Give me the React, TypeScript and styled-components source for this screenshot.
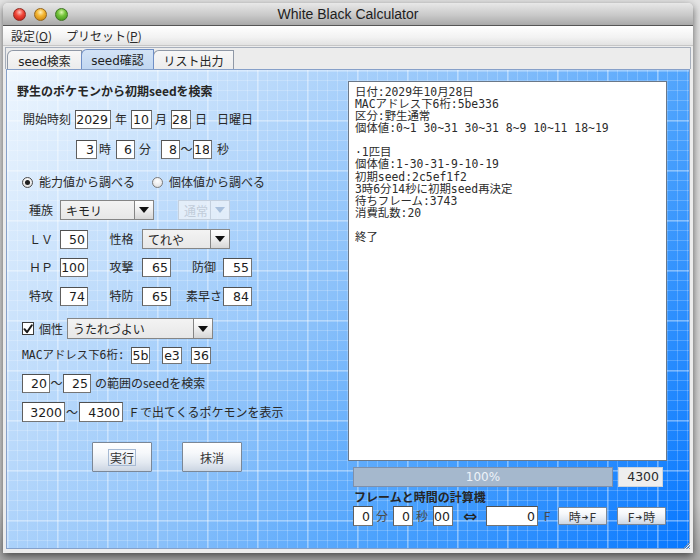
import React from "react";
import styled, { createGlobalStyle, css } from "styled-components";

const JP = `"Noto Sans CJK JP", sans-serif`;
const UI = `"DejaVu Sans", "Noto Sans CJK JP", sans-serif`;
const MONO = `"DejaVu Sans Mono", "Noto Sans CJK JP", monospace`;

const GlobalStyle = createGlobalStyle`
  html, body { margin: 0; padding: 0; }
  body { width: 700px; height: 560px; overflow: hidden; background: #cdcdcd; font-family: ${JP}; }
  *, *::before, *::after { box-sizing: border-box; }
`;

const Desktop = styled.div`
  width: 700px;
  height: 560px;
  padding: 3px 0 0 3px;
  background: linear-gradient(#e4e4e4, #cfcfcf 90%, #a8a8a8);
`;

const Window = styled.div`
  position: relative;
  width: 690px;
  height: 550px;
  display: flex;
  flex-direction: column;
  background: #ececec;
  border-radius: 5px 5px 0 0;
  overflow: hidden;
  box-shadow: 0 3px 9px rgba(0, 0, 0, 0.6);
`;

const TitleBar = styled.div`
  height: 23px;
  flex: none;
  display: grid;
  grid-template-columns: 1fr auto 1fr;
  align-items: center;
  background: linear-gradient(#e8e8e8, #c9c9c9 55%, #a9a9a9);
  border-bottom: 1px solid #555;
`;

const Lights = styled.div`
  display: flex;
  gap: 8px;
  padding-left: 10px;
`;

const Light = styled.span<{ $c: "red" | "yellow" | "green" }>`
  width: 13px;
  height: 13px;
  border-radius: 50%;
  ${(p) =>
    p.$c === "red"
      ? css`
          background: radial-gradient(circle at 50% 30%, #ffc2ba 0%, #f0483a 40%, #b3130c 100%);
          border: 1px solid #8e2a22;
        `
      : p.$c === "yellow"
      ? css`
          background: radial-gradient(circle at 50% 30%, #fff0b8 0%, #f4b632 40%, #c07a0a 100%);
          border: 1px solid #94651c;
        `
      : css`
          background: radial-gradient(circle at 50% 30%, #dcf7b0 0%, #74c43a 40%, #3a8c18 100%);
          border: 1px solid #3f7424;
        `}
`;

const Title = styled.div`
  font: 14px "Liberation Sans", Arial, sans-serif;
  color: #1d1d1d;
`;

const MenuBar = styled.div`
  height: 20px;
  flex: none;
  display: flex;
  align-items: center;
  gap: 14px;
  padding-left: 8px;
  background: linear-gradient(#ffffff, #f2f2f2 60%, #e2e2e2);
  border-bottom: 1px solid #c6c6c6;
`;

const MenuItem = styled.span`
  font: 12px/18px ${JP};
  color: #2a2a2a;
`;

const Body = styled.div`
  flex: 1;
  display: flex;
  flex-direction: column;
  padding: 1px 2px 4px 2px;
`;

const TabStrip = styled.div`
  height: 22px;
  flex: none;
  display: flex;
  align-items: flex-end;
  padding-left: 1px;
  border: 1px solid #a7afbc;
  border-bottom: none;
`;

const Tab = styled.div<{ $w: number; $active?: boolean }>`
  width: ${(p) => p.$w}px;
  height: ${(p) => (p.$active ? 20 : 19)}px;
  margin-left: -1px;
  &:first-child { margin-left: 0; }
  position: relative;
  z-index: ${(p) => (p.$active ? 1 : 0)};
  display: flex;
  align-items: center;
  justify-content: center;
  font: 12px ${UI};
  color: #222;
  border: 1px solid ${(p) => (p.$active ? "#6f8fc6" : "#8f98a6")};
  border-bottom: none;
  border-top-left-radius: 6px;
  background: ${(p) => (p.$active ? "linear-gradient(#d3e3f6, #c1d7f1)" : "linear-gradient(#f7f7f7, #ececec)")};
`;

const Panel = styled.div`
  height: 480px;
  flex: none;
  margin: 0 1px;
  display: flex;
  padding: 11px 0 0 10px;
  border: 1px solid #86a0c9;
  background-color: #8cc0f8;
  background-image: linear-gradient(rgba(255, 255, 255, 0.24) 2px, transparent 2px),
    linear-gradient(90deg, rgba(255, 255, 255, 0.24) 2px, transparent 2px),
    linear-gradient(rgba(255, 255, 255, 0.2) 1px, transparent 1px),
    linear-gradient(90deg, rgba(255, 255, 255, 0.2) 1px, transparent 1px),
    linear-gradient(125deg, #eef6fe 0%, #bddbfb 25%, #89c0fa 48%, #4aa1fd 69%, #0878ff 100%);
  background-size: 50px 50px, 50px 50px, 10px 10px, 10px 10px, 100% 100%;
  background-position: 0 0, 0 0, 0 0, 0 0, 0 0;
`;

const LeftCol = styled.div`
  width: 331px;
  flex: none;
  display: flex;
  flex-direction: column;
`;

const RightCol = styled.div`
  width: 319px;
  flex: none;
  display: flex;
  flex-direction: column;
`;

const Heading = styled.div<{ $mt?: number; $ml?: number; $h?: number }>`
  font: bold 12px/${(p) => p.$h ?? 20}px ${JP};
  color: #262626;
  margin-top: ${(p) => p.$mt ?? 0}px;
  margin-left: ${(p) => p.$ml ?? 0}px;
  white-space: nowrap;
`;

const Row = styled.div<{ $mt?: number; $ml?: number; $h?: number }>`
  display: flex;
  align-items: center;
  height: ${(p) => p.$h ?? 20}px;
  margin-top: ${(p) => p.$mt ?? 0}px;
  margin-left: ${(p) => p.$ml ?? 0}px;
`;

const Text = styled.span<{ $w?: number; $ml?: number; $pl?: number; $align?: "left" | "center" | "right"; $mono?: boolean; $tone?: string }>`
  flex: none;
  display: block;
  white-space: nowrap;
  font: ${(p) => (p.$mono ? `11.4px/20px ${MONO}` : `12px/20px ${JP}`)};
  color: ${(p) => p.$tone ?? "#282828"};
  ${(p) => p.$w != null && css`width: ${p.$w}px;`}
  margin-left: ${(p) => p.$ml ?? 0}px;
  padding-left: ${(p) => p.$pl ?? 0}px;
  text-align: ${(p) => p.$align ?? "left"};
`;

const Field = styled.input.attrs({ readOnly: true, type: "text" })<{ $w: number; $h?: number; $ml?: number; $center?: boolean }>`
  flex: none;
  display: block;
  width: ${(p) => p.$w}px;
  height: ${(p) => p.$h ?? 19}px;
  margin: 0 0 0 ${(p) => p.$ml ?? 0}px;
  padding: 0 ${(p) => (p.$center ? 0 : 2)}px 0 0;
  border: 1px solid #747474;
  border-top-color: #4f4f4f;
  border-left-color: #5e5e5e;
  background: #fff;
  color: #1c1c1c;
  font: 12.5px ${UI};
  text-align: ${(p) => (p.$center ? "center" : "right")};
  outline: none;
  border-radius: 0;
`;

const Combo = styled.div<{ $w: number; $h?: number; $ml?: number; $disabled?: boolean }>`
  flex: none;
  display: flex;
  width: ${(p) => p.$w}px;
  height: ${(p) => p.$h ?? 20}px;
  margin-left: ${(p) => p.$ml ?? 0}px;
  border: 1px solid ${(p) => (p.$disabled ? "#c4d0de" : "#858585")};
  background: ${(p) => (p.$disabled ? "rgba(238, 243, 249, 0.8)" : "linear-gradient(#f3f3f3, #e7e7e7)")};
`;

const ComboValue = styled.span<{ $disabled?: boolean }>`
  flex: 1;
  display: flex;
  align-items: center;
  padding-left: 5px;
  font: 12px ${JP};
  color: ${(p) => (p.$disabled ? "#c1ccd9" : "#222")};
  white-space: nowrap;
  overflow: hidden;
`;

const ComboButton = styled.span<{ $disabled?: boolean }>`
  flex: none;
  width: 19px;
  display: flex;
  align-items: center;
  justify-content: center;
  border-left: 1px solid ${(p) => (p.$disabled ? "#c4d0de" : "#858585")};
  background: ${(p) => (p.$disabled ? "transparent" : "linear-gradient(#ffffff, #f1f1f1 45%, #d6d6d6)")};
`;

const Caret = styled.span<{ $disabled?: boolean }>`
  width: 0;
  height: 0;
  border-left: 5px solid transparent;
  border-right: 5px solid transparent;
  border-top: 6px solid ${(p) => (p.$disabled ? "#a9c0dc" : "#111")};
`;

const Radio = styled.span<{ $on?: boolean; $ml?: number }>`
  flex: none;
  width: 11px;
  height: 11px;
  margin-left: ${(p) => p.$ml ?? 0}px;
  border-radius: 50%;
  border: 1px solid ${(p) => (p.$on ? "#4a4a4a" : "#7a7a7a")};
  background: radial-gradient(circle at 50% 35%, #ffffff 0%, #e9e9e9 60%, #cfcfcf 100%);
  display: flex;
  align-items: center;
  justify-content: center;
  &::after {
    content: "";
    display: ${(p) => (p.$on ? "block" : "none")};
    width: 5px;
    height: 5px;
    border-radius: 50%;
    background: #1d1d1d;
  }
`;

const CheckBox = styled.span`
  flex: none;
  width: 12px;
  height: 13px;
  border: 1px solid #3c3c3c;
  background: #fff;
  display: flex;
  align-items: center;
  justify-content: center;
`;

const Button = styled.button<{ $w: number; $h: number; $ml?: number }>`
  flex: none;
  width: ${(p) => p.$w}px;
  height: ${(p) => p.$h}px;
  margin: 0 0 0 ${(p) => p.$ml ?? 0}px;
  padding: 0;
  border: 1px solid #7b8796;
  border-radius: 1px;
  background: linear-gradient(#ffffff 0%, #f6f8fb 35%, #e3e9f1 70%, #cbd5e2 100%);
  font: 12px ${JP};
  color: #333;
  display: flex;
  align-items: center;
  justify-content: center;
  white-space: nowrap;
`;

const FocusRing = styled.span`
  border: 1px solid #a6bad4;
  padding: 0 1px;
  line-height: 15px;
`;

const SmallArrow = styled.span`
  font: bold 8px ${UI};
  margin: 0 1px;
  position: relative;
  top: 1px;
`;

const TextArea = styled.div`
  width: 319px;
  height: 380px;
  flex: none;
  background: #fff;
  border: 1px solid #6b7888;
  padding: 4px 6px;
  font: 11.4px/12.08px ${MONO};
  color: #2c2c2c;
  white-space: pre;
  overflow: hidden;
`;

const Progress = styled.div<{ $ml?: number }>`
  position: relative;
  flex: none;
  width: 260px;
  height: 20px;
  margin-left: ${(p) => p.$ml ?? 0}px;
  border: 1px solid #7f90aa;
  background: #b8c6d6;
  display: flex;
`;

const ProgressFill = styled.div`
  height: 100%;
  background: #a5b8cd;
`;

const ProgressLabel = styled.span`
  position: absolute;
  inset: 0;
  display: flex;
  align-items: center;
  justify-content: center;
  font: 12px ${UI};
  color: #eef3f9;
`;

const Count = styled.div<{ $ml?: number }>`
  flex: none;
  width: 45px;
  height: 20px;
  margin-left: ${(p) => p.$ml ?? 0}px;
  border: 1px solid #cfd4da;
  background: #eeeeee;
  font: 12.5px/18px ${UI};
  color: #2a2a2a;
  text-align: right;
  padding-right: 3px;
`;

const Swap = styled.span<{ $ml?: number }>`
  flex: none;
  width: 18px;
  margin-left: ${(p) => p.$ml ?? 0}px;
  font: 17px/20px ${UI};
  color: #222;
  text-align: center;
`;

const Grip = styled.svg`
  position: absolute;
  right: 2px;
  bottom: 3px;
`;

const textLog = `日付:2029年10月28日
MACアドレス下6桁:5be336
区分:野生通常
個体値:0~1 30~31 30~31 8~9 10~11 18~19

·1匹目
個体値:1-30-31-9-10-19
初期seed:2c5ef1f2
3時6分14秒に初期seed再決定
待ちフレーム:3743
消費乱数:20

終了`;

const progress = 100;

export default function App() {
  return (
    <>
      <GlobalStyle />
      <Desktop>
        <Window>
          <TitleBar>
            <Lights>
              <Light $c="red" />
              <Light $c="yellow" />
              <Light $c="green" />
            </Lights>
            <Title>White Black Calculator</Title>
            <span />
          </TitleBar>
          <MenuBar>
            <MenuItem>
              設定(<u>O</u>)
            </MenuItem>
            <MenuItem>
              プリセット(<u>P</u>)
            </MenuItem>
          </MenuBar>
          <Body>
            <TabStrip>
              <Tab $w={75}>seed検索</Tab>
              <Tab $w={73} $active>
                seed確認
              </Tab>
              <Tab $w={81}>リスト出力</Tab>
            </TabStrip>
            <Panel>
              <LeftCol>
                <Heading>野生のポケモンから初期seedを検索</Heading>

                <Row $mt={8} $ml={6}>
                  <Text $w={48}>開始時刻</Text>
                  <Field $w={36} $ml={4} defaultValue="2029" />
                  <Text $w={12} $ml={4}>年</Text>
                  <Field $w={21} $ml={4} defaultValue="10" />
                  <Text $w={12} $ml={3}>月</Text>
                  <Field $w={20} $ml={4} defaultValue="28" />
                  <Text $w={12} $ml={4}>日</Text>
                  <Text $ml={10}>日曜日</Text>
                </Row>

                <Row $mt={10} $ml={59}>
                  <Field $w={21} defaultValue="3" />
                  <Text $w={12} $ml={2}>時</Text>
                  <Field $w={19} $ml={5} defaultValue="6" />
                  <Text $w={12} $ml={4}>分</Text>
                  <Field $w={19} $ml={10} defaultValue="8" />
                  <Text $w={13} $align="center">〜</Text>
                  <Field $w={19} defaultValue="18" />
                  <Text $w={12} $ml={5}>秒</Text>
                </Row>

                <Row $mt={13} $ml={5}>
                  <Radio $on />
                  <Text $w={113} $ml={6}>能力値から調べる</Text>
                  <Radio />
                  <Text $ml={6}>個体値から調べる</Text>
                </Row>

                <Row $mt={8} $ml={5}>
                  <Text $w={38} $align="center">種族</Text>
                  <Combo $w={94}>
                    <ComboValue>キモリ</ComboValue>
                    <ComboButton>
                      <Caret />
                    </ComboButton>
                  </Combo>
                  <Combo $w={52} $ml={24} $disabled>
                    <ComboValue $disabled>通常</ComboValue>
                    <ComboButton $disabled>
                      <Caret $disabled />
                    </ComboButton>
                  </Combo>
                </Row>

                <Row $mt={9} $ml={5}>
                  <Text $w={38} $align="center">ＬＶ</Text>
                  <Field $w={28} defaultValue="50" />
                  <Text $w={54} $pl={13} $align="center">性格</Text>
                  <Combo $w={88}>
                    <ComboValue>てれや</ComboValue>
                    <ComboButton>
                      <Caret />
                    </ComboButton>
                  </Combo>
                </Row>

                <Row $mt={8} $ml={5}>
                  <Text $w={38} $align="center">ＨＰ</Text>
                  <Field $w={28} defaultValue="100" />
                  <Text $w={54} $pl={13} $align="center">攻撃</Text>
                  <Field $w={29} defaultValue="65" />
                  <Text $w={52} $pl={14} $align="center">防御</Text>
                  <Field $w={29} defaultValue="55" />
                </Row>

                <Row $mt={9} $ml={5}>
                  <Text $w={38} $align="center">特攻</Text>
                  <Field $w={28} defaultValue="74" />
                  <Text $w={54} $pl={13} $align="center">特防</Text>
                  <Field $w={29} defaultValue="65" />
                  <Text $w={52} $pl={14} $align="center">素早さ</Text>
                  <Field $w={29} defaultValue="84" />
                </Row>

                <Row $mt={12} $ml={5} $h={21}>
                  <CheckBox>
                    <svg width="10" height="10" viewBox="0 0 10 10">
                      <path d="M1.5 5.2 L4 8.2 L8.8 1.2" fill="none" stroke="#1a1a1a" strokeWidth="2" strokeLinecap="round" strokeLinejoin="round" />
                    </svg>
                  </CheckBox>
                  <Text $w={24} $ml={5}>個性</Text>
                  <Combo $w={146} $h={21} $ml={4}>
                    <ComboValue>うたれづよい</ComboValue>
                    <ComboButton>
                      <Caret />
                    </ComboButton>
                  </Combo>
                </Row>

                <Row $mt={6} $ml={5}>
                  <Text $w={106} $mono>MACアドレス下6桁:</Text>
                  <Field $w={19} $h={17} $ml={3} $center defaultValue="5b" />
                  <Field $w={20} $h={17} $ml={12} $center defaultValue="e3" />
                  <Field $w={20} $h={17} $ml={9} $center defaultValue="36" />
                </Row>

                <Row $mt={8} $ml={5}>
                  <Field $w={28} defaultValue="20" />
                  <Text $w={13} $align="center">〜</Text>
                  <Field $w={28} defaultValue="25" />
                  <Text $ml={4}>の範囲のseedを検索</Text>
                </Row>

                <Row $mt={9} $ml={5}>
                  <Field $w={43} $h={20} defaultValue="3200" />
                  <Text $w={14} $align="center">〜</Text>
                  <Field $w={44} $h={20} defaultValue="4300" />
                  <Text $ml={5}>Ｆで出てくるポケモンを表示</Text>
                </Row>

                <Row $mt={20} $ml={75} $h={30}>
                  <Button $w={60} $h={30}>
                    <FocusRing>実行</FocusRing>
                  </Button>
                  <Button $w={60} $h={30} $ml={30}>
                    抹消
                  </Button>
                </Row>
              </LeftCol>

              <RightCol>
                <TextArea>{textLog}</TextArea>
                <Row $mt={6} $ml={5}>
                  <Progress>
                    <ProgressFill style={{ width: `${progress}%` }} />
                    <ProgressLabel>{progress}%</ProgressLabel>
                  </Progress>
                  <Count $ml={5}>4300</Count>
                </Row>
                <Heading $mt={2} $ml={6} $h={16}>
                  フレームと時間の計算機
                </Heading>
                <Row $mt={1} $ml={5}>
                  <Field $w={20} $h={20} defaultValue="0" />
                  <Text $w={12} $ml={3} $tone="#4a4a4a">分</Text>
                  <Field $w={20} $h={20} $ml={5} defaultValue="0" />
                  <Text $w={12} $ml={3} $tone="#4a4a4a">秒</Text>
                  <Field $w={20} $h={20} $ml={5} defaultValue="00" />
                  <Swap $ml={8}>⇔</Swap>
                  <Field $w={52} $h={20} $ml={7} defaultValue="0" />
                  <Text $w={12} $ml={3} $tone="#4a4a4a" $align="center">F</Text>
                  <Button $w={49} $h={18} $ml={5}>
                    時<SmallArrow>➔</SmallArrow>F
                  </Button>
                  <Button $w={49} $h={18} $ml={10}>
                    F<SmallArrow>➔</SmallArrow>時
                  </Button>
                </Row>
              </RightCol>
            </Panel>
          </Body>
          <Grip width="9" height="9" viewBox="0 0 9 9">
            <path d="M8 1 L1 8 M8 4 L4 8 M8 7 L7 8" stroke="#8b96a3" strokeWidth="1" />
            <path d="M9 2 L2 9 M9 5 L5 9" stroke="#f4f6f8" strokeWidth="1" />
          </Grip>
        </Window>
      </Desktop>
    </>
  );
}
